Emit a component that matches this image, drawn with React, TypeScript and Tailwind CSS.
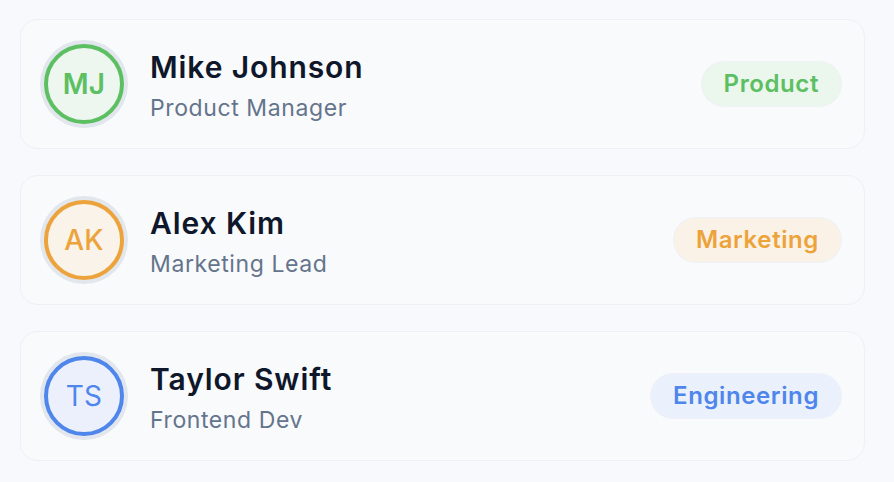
import React from 'react';

type Member = {
  initials: string;
  name: string;
  role: string;
  team: string;
  ring: string;
  avatarBg: string;
  initialsWeight: string;
  badge: string;
};

const members: Member[] = [
  {
    initials: 'MJ',
    name: 'Mike Johnson',
    role: 'Product Manager',
    team: 'Product',
    ring: 'border-[#5cbf62] text-[#5cbf62]',
    avatarBg: 'bg-[#edf6ef]',
    initialsWeight: 'font-semibold',
    badge: 'bg-[#ebf6ed] text-[#5cbf62]',
  },
  {
    initials: 'AK',
    name: 'Alex Kim',
    role: 'Marketing Lead',
    team: 'Marketing',
    ring: 'border-[#eda33c] text-[#eda33c]',
    avatarBg: 'bg-[#f9f3ea]',
    initialsWeight: 'font-medium',
    badge: 'bg-[#faf2e6] text-[#eda33c]',
  },
  {
    initials: 'TS',
    name: 'Taylor Swift',
    role: 'Frontend Dev',
    team: 'Engineering',
    ring: 'border-[#4f86ec] text-[#4f86ec]',
    avatarBg: 'bg-[#ebf0fc]',
    initialsWeight: 'font-normal',
    badge: 'bg-[#eaf0fc] text-[#4f86ec]',
  },
];

export default function App() {
  return (
    <div
      className="min-h-screen bg-[#f8f9fc] pt-[19px] pl-5 pr-[29px] pb-5"
      style={{ fontFamily: 'Inter, "Noto Sans", sans-serif' }}
    >
      <div className="flex flex-col gap-[26px]">
        {members.map((m) => (
          <div
            key={m.name}
            className="h-[130px] rounded-[18px] border border-[#eef0f6] bg-[#f9fafc] pl-[23px] pr-[23px] flex items-center"
          >
            {/* Avatar */}
            <div
              className={`w-20 h-20 rounded-full border-4 ${m.ring} ${m.avatarBg} shadow-[0_0_0_4px_#e2e6ed] flex items-center justify-center shrink-0 -mt-[1px]`}
            >
              <span className={`text-[28px] leading-none tracking-[0.3px] ${m.initialsWeight}`}>{m.initials}</span>
            </div>

            {/* Name */}
            <div className="ml-[26px] flex-1 mt-[2px]">
              <div className="text-[30px] leading-[36px] font-semibold text-[#0f172a] tracking-[0.9px]">
                {m.name}
              </div>
              <div className="text-[23px] leading-[28px] text-[#64748b] tracking-[0.6px] mt-[9px]">{m.role}</div>
            </div>

            {/* Team badge */}
            <span
              className={`h-11 px-[22px] rounded-full flex items-center text-[24px] font-semibold tracking-[0.6px] shadow-[0_0_0_1px_#eef1f6] ${m.badge}`}
            >
              {m.team}
            </span>
          </div>
        ))}
      </div>
    </div>
  );
}
